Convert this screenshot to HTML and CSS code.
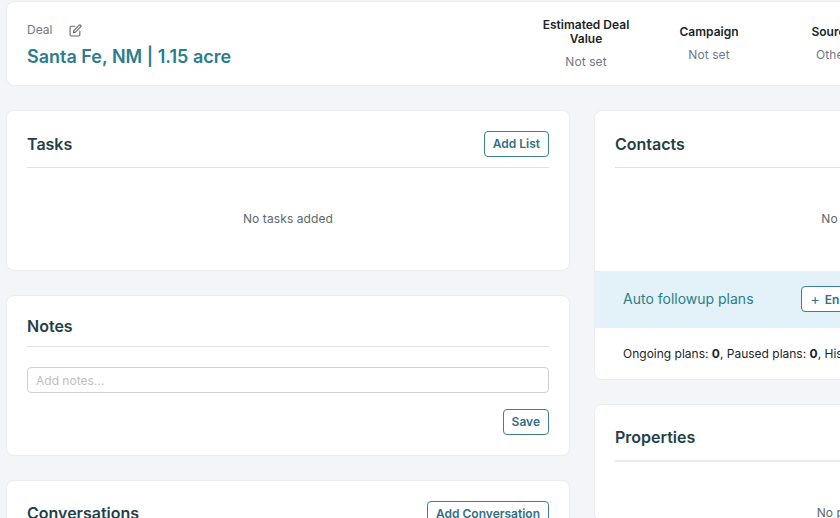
FILE: index.html
```html
<!DOCTYPE html>
<html lang="en">
<head>
<meta charset="utf-8">
<title>Deal</title>
<link rel="stylesheet" href="styles.css">
</head>
<body>
<div class="page">
  <header class="card deal">
    <div class="deal-main">
      <div class="deal-label">
        <span>Deal</span>
        <svg class="edit-icon" viewBox="0 0 24 24" width="13" height="13" fill="none" stroke="#5f6a70" stroke-width="2" stroke-linecap="round" stroke-linejoin="round" aria-hidden="true"><path d="M11 4H4a2 2 0 0 0-2 2v14a2 2 0 0 0 2 2h14a2 2 0 0 0 2-2v-7"/><path d="M18.5 2.5a2.12 2.12 0 0 1 3 3L12 15l-4 1 1-4z"/></svg>
      </div>
      <h1 class="deal-title">Santa Fe, NM | 1.15 acre</h1>
    </div>
    <div class="deal-meta">
      <div class="meta"><div class="meta-key">Estimated Deal Value</div><div class="meta-val">Not set</div></div>
      <div class="meta"><div class="meta-key">Campaign</div><div class="meta-val">Not set</div></div>
      <div class="meta"><div class="meta-key">Source</div><div class="meta-val">Other</div></div>
    </div>
  </header>

  <div class="columns">
    <div class="column">
      <section class="card panel tasks">
        <div class="panel-head"><h2>Tasks</h2><button class="btn">Add List</button></div>
        <p class="empty">No tasks added</p>
      </section>
      <section class="card panel notes">
        <div class="panel-head plain"><h2>Notes</h2></div>
        <input class="notes-input" type="text" placeholder="Add notes...">
        <div class="notes-actions"><button class="btn">Save</button></div>
      </section>
      <section class="card panel conversations">
        <div class="panel-head"><h2>Conversations</h2><button class="btn">Add Conversation</button></div>
      </section>
    </div>
    <div class="column">
      <section class="card contacts">
        <div class="panel contacts-top">
          <div class="panel-head"><h2>Contacts</h2></div>
          <p class="empty">No contacts added</p>
        </div>
        <div class="plans-band">
          <span class="plans-title">Auto followup plans</span>
          <button class="btn enroll"><span class="plus">+</span>Enroll</button>
        </div>
        <div class="plans-stats">Ongoing plans: <b>0</b>, Paused plans: <b>0</b>, History plans: <b>0</b></div>
      </section>
      <section class="card panel">
        <div class="panel-head plain-tall"><h2>Properties</h2></div>
        <p class="empty">No properties added</p>
      </section>
    </div>
  </div>
</div>
</body>
</html>
```
FILE: styles.css
```css
* { box-sizing: border-box; }
html, body { margin: 0; height: 100%; overflow: hidden; }
body {
  background: #f3f5f9;
  font-family: Inter, "Liberation Sans", sans-serif;
  color: #263f47;
}
.page { width: 1158px; margin-left: 6px; padding-top: 1px; }
.card {
  background: #fff;
  border: 1px solid #ebedf1;
  border-radius: 8px;
}
.deal {
  width: 1300px;
  height: 85px;
  display: flex;
  align-items: center;
  padding: 0 20px;
}
.deal-main { width: 509px; flex: none; padding-top: 4px; }
.deal-label {
  display: flex;
  align-items: center;
  gap: 17px;
  font-size: 12px;
  line-height: 16px;
  color: #6f7a80;
}
.deal-title {
  margin: 7px 0 0;
  font-size: 18px;
  line-height: 24px;
  font-weight: 600;
  color: #2b7d8c;
}
.deal-meta { display: flex; flex: 1; gap: 23px; align-items: center; }
.meta { width: 100px; text-align: center; }
.meta-key { font-size: 12px; line-height: 14px; font-weight: 600; color: #1c2528; }
.meta-val { margin-top: 8px; font-size: 12px; letter-spacing: 0.1px; line-height: 16px; color: #6f7a80; }
.columns { display: flex; gap: 24px; margin-top: 24px; align-items: flex-start; }
.column { width: 564px; flex: none; display: flex; flex-direction: column; gap: 24px; }
.panel { padding: 0 20px; }
.tasks { height: 161px; }
.notes { height: 161px; }
.panel-head {
  display: flex;
  justify-content: space-between;
  align-items: center;
  height: 57px;
  padding-top: 10px;
  border-bottom: 1px solid #dfe2e4;
}
.panel-head.plain { height: 51px; }
.panel-head.plain-tall { padding-top: 8px; border-bottom-width: 2px; border-color: #e8eaec; }
.conversations h2 { margin-top: -2px; }
h2 { margin: 0; font-size: 16px; line-height: 24px; font-weight: 600; color: #263f47; }
.btn {
  height: 26px;
  padding: 0 8px;
  background: #fff;
  border: 1px solid #3f7f8e;
  border-radius: 4px;
  font: 600 12px/16px Inter, "Liberation Sans", sans-serif;
  color: #33707f;
  white-space: nowrap;
}
.empty {
  margin: 43px 0 0;
  text-align: center;
  font-size: 12px;
  letter-spacing: 0.1px;
  line-height: 16px;
  color: #5c676c;
}
.notes-input {
  display: block;
  width: 100%;
  height: 26px;
  margin-top: 20px;
  padding: 0 8px;
  border: 1px solid #d0d2d4;
  border-radius: 4px;
  font: 12px Inter, "Liberation Sans", sans-serif;
}
.notes-input::placeholder { color: #bcc0c3; opacity: 1; }
.notes-actions { display: flex; justify-content: flex-end; margin-top: 16px; }
.contacts { height: 270px; overflow: hidden; }
.contacts-top { height: 160px; }
.plans-band {
  display: flex;
  align-items: center;
  gap: 47px;
  height: 57px;
  padding: 0 28px 1px;
  background: #e3f2f8;
}
.plans-title { margin-bottom: 2px; font-size: 14px; color: #2b7d8c; }
.enroll { flex: none; padding: 0 9px; }
.plus { margin-right: 5px; font-weight: 400; font-size: 14px; }
.plans-stats {
  padding: 18px 28px 0;
  font-size: 12px;
  line-height: 16px;
  color: #1c2528;
  white-space: nowrap;
}
.plans-stats b { font-weight: 700; }
```
